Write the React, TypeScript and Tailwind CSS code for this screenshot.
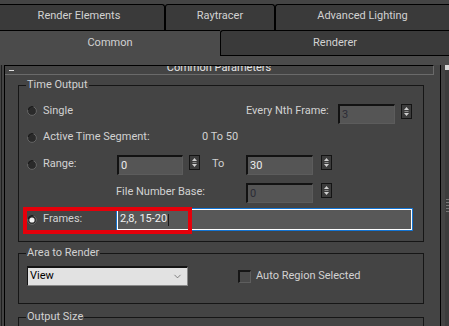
import { ChevronDown } from "lucide-react";

function Radio({ checked = false }: { checked?: boolean }) {
  return (
    <svg width="10" height="10" viewBox="0 0 10 10" className="shrink-0">
      <circle cx="5" cy="5" r="4.4" fill="#2a2a2a" stroke="#6a6a6a" strokeWidth="0.9" />
      <path d="M1.2 4 A4 4 0 0 1 6.5 0.9" stroke="#161616" strokeWidth="1.1" fill="none" />
      {checked && <circle cx="5" cy="5" r="2.6" fill="#f2f2f2" />}
    </svg>
  );
}

function Spinner() {
  return (
    <div className="w-[11px] h-[15px] shrink-0 border border-[#141414] bg-[#3c3c3c] flex items-center justify-center">
      <svg width="9" height="13" viewBox="0 0 9 13">
        <path d="M4.5 2 L7 5 L2 5 Z" fill="#d0d0d0" />
        <path d="M2.5 6.5 H6.5" stroke="#8a8a8a" strokeWidth="1" />
        <path d="M4.5 11 L7 8 L2 8 Z" fill="#d0d0d0" />
      </svg>
    </div>
  );
}

function Field({ className, value, disabled = false }: { className: string; value: string; disabled?: boolean }) {
  return (
    <div
      className={`${className} shrink-0 border-t-2 border-l-2 border-t-[#121212] border-l-[#121212] border-r border-b border-r-[#5c5c5c] border-b-[#5c5c5c] bg-[#555555] flex items-center pl-[2px] leading-none ${
        disabled ? "text-[#2c2c36]" : "text-[#ececec]"
      }`}
    >
      {value}
    </div>
  );
}

export default function App() {
  return (
    <div className="w-[449px] h-[326px] overflow-hidden bg-[#444444] text-[11px] text-[#d2d2d2] font-[family-name:Roboto,sans-serif] relative">
      {/* Tabs */}
      <div className="pt-[4px]">
        <div className="flex h-[26px]">
          <div className="w-[168px] -ml-[3px] shrink-0 border-t border-x border-black rounded-t-[3px] bg-[#3a3a3a] flex items-center justify-center pb-[2px] pr-[4px]">
            Render Elements
          </div>
          <div className="w-[110px] shrink-0 border-t border-x border-black rounded-t-[3px] bg-[#3a3a3a] flex items-center justify-center pb-[2px]">
            Raytracer
          </div>
          <div className="flex-1 border-t border-l border-black rounded-tl-[3px] bg-[#3a3a3a] flex items-center justify-center pb-[2px]">
            Advanced Lighting
          </div>
        </div>
        <div className="flex h-[26px]">
          <div className="w-[220px] shrink-0 border-t border-black bg-[#4b4b4b] flex items-center justify-center">
            Common
          </div>
          <div className="flex-1 border-t border-l border-b border-black rounded-tl-[3px] bg-[#3a3a3a] flex items-center justify-center">
            Renderer
          </div>
        </div>
        <div className="h-[9px] bg-[#4b4b4b]" />
      </div>

      {/* Body */}
      <div className="flex h-[270px]">
        <div className="w-[1px] ml-[1px] shrink-0 bg-[#1e1e1e]" />
        <div className="w-[2px] shrink-0" />
        <div className="w-[436px] shrink-0 border-l border-black">
          {/* Rollout header */}
          <div className="w-[429px] h-[10px] border-t border-black border-b border-r border-b-[#6a6a6a] border-r-[#6a6a6a] flex overflow-hidden">
            <div className="w-[5px] h-[1px] ml-[4px] mt-[4px] shrink-0 bg-[#e0e0e0]" />
            <div className="flex-1 text-center leading-[14px] -mt-[5px] pr-[9px] text-[#e4e4e4]">Common Parameters</div>
          </div>

          {/* Time Output */}
          <fieldset className="mt-[3px] ml-[13px] w-[406px] border border-[#161616] pb-[9px]">
            <legend className="ml-[7px] px-[1px] leading-[14px]">Time Output</legend>
            <div className="pt-[6px]">
              <div className="flex items-center h-[26px]">
                <div className="ml-[8px]">
                  <Radio />
                </div>
                <div className="ml-[6px] w-[203px] shrink-0">Single</div>
                <div className="w-[92px] shrink-0">Every Nth Frame:</div>
                <div className="flex items-start gap-[6px] mt-[6px]">
                  <Field className="w-[57px] h-[20px]" value="3" disabled />
                  <Spinner />
                </div>
              </div>

              <div className="flex items-center h-[27px]">
                <div className="ml-[8px]">
                  <Radio />
                </div>
                <div className="ml-[6px] w-[159px] shrink-0">Active Time Segment:</div>
                <div>0 To 50</div>
              </div>

              <div className="flex items-center h-[27px]">
                <div className="ml-[8px]">
                  <Radio />
                </div>
                <div className="ml-[6px] w-[74px] shrink-0">Range:</div>
                <div className="flex items-start gap-[6px]">
                  <Field className="w-[66px] h-[20px]" value="0" />
                  <Spinner />
                </div>
                <div className="ml-[12px] w-[34px] shrink-0">To</div>
                <div className="flex items-start gap-[8px]">
                  <Field className="w-[67px] h-[20px]" value="30" />
                  <Spinner />
                </div>
              </div>

              <div className="flex items-center h-[29px]">
                <div className="ml-[97px] w-[130px] shrink-0">File Number Base:</div>
                <div className="flex items-start gap-[8px]">
                  <Field className="w-[67px] h-[20px]" value="0" disabled />
                  <Spinner />
                </div>
              </div>

              <div className="flex items-center h-[25px]">
                <div className="ml-[8px]">
                  <Radio checked />
                </div>
                <div className="ml-[6px] w-[73px] shrink-0">Frames:</div>
                <div className="w-[297px] h-[23px] shrink-0 border border-[#1474d2] shadow-[inset_0_0_0_1px_#ffffff] bg-[#585858] flex items-center pl-[3px] text-[#f0f0f0]">
                  <span>2,8, 15-20</span>
                  <span className="w-[1px] h-[12px] bg-[#1c1c1c] ml-[1px]" />
                </div>
              </div>
            </div>
          </fieldset>

          {/* Area to Render */}
          <fieldset className="mt-[4px] ml-[13px] w-[406px] border border-[#161616] pb-[17px]">
            <legend className="ml-[7px] px-[1px] leading-[14px]">Area to Render</legend>
            <div className="flex items-center h-[20px] mt-[6px]">
              <div className="ml-[8px] w-[161px] h-[20px] shrink-0 border-t-2 border-l border-t-[#141414] border-l-[#141414] border-r border-b border-r-[#8a8a8a] border-b-[#8a8a8a] bg-[#e2e2e2] text-black flex items-center pl-[2px] pr-[4px]">
                <span className="flex-1">View</span>
                <ChevronDown size={11} strokeWidth={1.5} className="text-[#555555]" />
              </div>
              <div className="ml-[50px] w-[13px] h-[13px] shrink-0 border-t-2 border-l-2 border-t-[#161616] border-l-[#161616] border-r border-b border-r-[#5e5e5e] border-b-[#5e5e5e] bg-[#4a4a4a]" />
              <div className="ml-[5px]">Auto Region Selected</div>
            </div>
          </fieldset>

          {/* Output Size */}
          <fieldset className="mt-[6px] ml-[13px] w-[406px] h-[60px] border border-[#161616]">
            <legend className="ml-[7px] px-[1px] leading-[14px]">Output Size</legend>
          </fieldset>
        </div>

        {/* Scrollbar */}
        <div className="w-[9px] shrink-0 border-l border-black flex justify-end">
          <div className="w-[4px] bg-[#3c3c3c] flex flex-col">
            <div className="h-[5px] bg-[#d8d8d8]" />
            <div className="mt-[129px] flex flex-col gap-[2px] items-center">
              <div className="w-[3px] h-[1px] bg-[#777777]" />
              <div className="w-[3px] h-[1px] bg-[#777777]" />
              <div className="w-[3px] h-[1px] bg-[#777777]" />
              <div className="w-[3px] h-[1px] bg-[#777777]" />
              <div className="w-[3px] h-[1px] bg-[#777777]" />
            </div>
          </div>
        </div>
      </div>

      {/* Highlight box */}
      <div className="absolute left-[23px] top-[207px] w-[169px] h-[27px] border-[4px] border-[#e5000a]" />
    </div>
  );
}
